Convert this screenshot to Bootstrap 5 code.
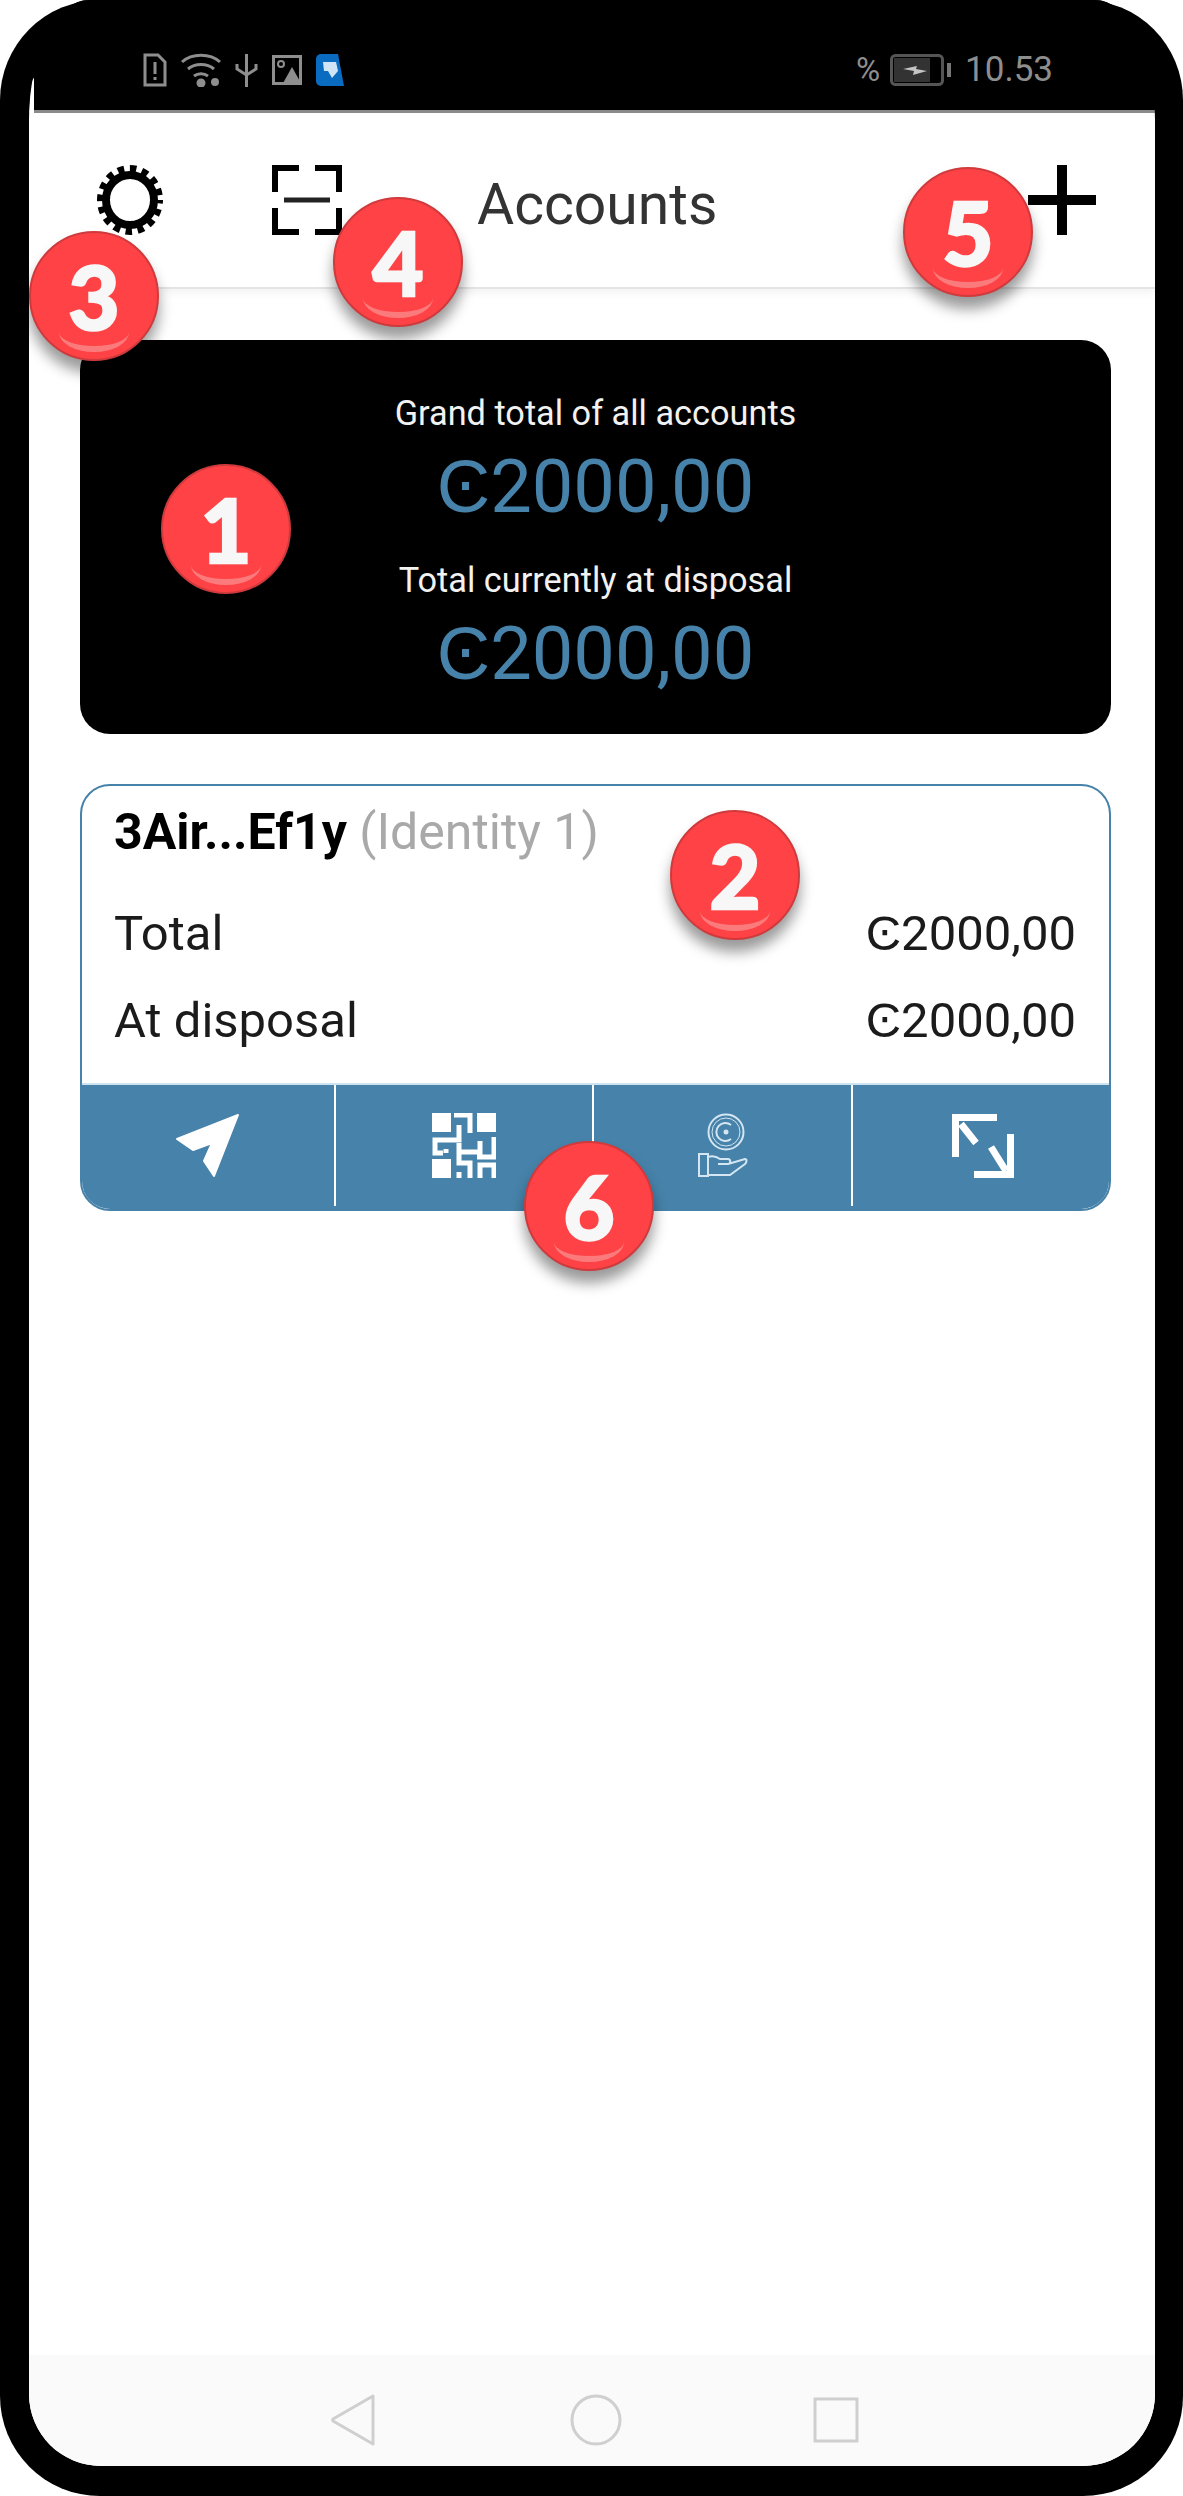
<!DOCTYPE html>
<html lang="en">
<head>
  <meta charset="UTF-8" />
  <meta name="viewport" content="width=device-width, initial-scale=1.0"/>
  <title>Accounts</title>
  <link href="https://cdn.jsdelivr.net/npm/bootstrap@5.3.0/dist/css/bootstrap.min.css" rel="stylesheet">
  <style>
    html, body { margin: 0; background: #fff; }
    body { font-family: Roboto, "Liberation Sans", sans-serif; width: 1183px; height: 2496px; overflow: hidden; }
    .phone-frame { position: relative; width: 1183px; height: 2496px; background: #000; border-radius: 100px; padding: 0 28px 30px 29px; }
    .phone-screen { height: 100%; background: linear-gradient(#000 113px, #fff 113px); border-radius: 60px 60px 72px 72px / 120px 120px 72px 72px; overflow: hidden; }
    .status-strip { position: relative; height: 113px; background: #000; border-bottom: 3px solid #8a8a8a; padding: 30px 102px 0 114px; color: #8e8e8e; }
    .status-strip::before { content: ""; position: absolute; left: 0; top: 78px; bottom: -3px; width: 5px; background: #fff; border-top-left-radius: 100%; }
    .status-left { gap: 14px; }
    .status-time { font-size: 35px; line-height: 38px; margin-left: 14px; }
    .status-pct { font-size: 33px; line-height: 38px; margin-right: 10px; }
    .app-header { height: 176px; border-bottom: 2px solid #e4e4e4; box-shadow: 0 4px 8px rgba(0,0,0,.05); padding: 0 59px 0 68px; }
    .scan-icon { margin-left: 109px; }
    .app-title { font-size: 57px; line-height: 1; color: #333; margin: 8px 0 0 135px; }
    .summary-box { background: #000; height: 394px; margin: 51px 44px 0 51px; border-radius: 30px; padding-top: 53px; }
    .summary-label { color: #f2f2f2; font-size: 34.300px; line-height: 40px; }
    .summary-amount { color: #4682a9; font-size: 74px; line-height: 108px; margin-bottom: 19px; }
    .account-box { height: 427px; margin: 50px 44px 0 51px; border: 2px solid #4682a9; border-radius: 30px; overflow: hidden; display: flex; flex-direction: column; }
    .account-body { flex: 1; padding: 18px 33px 0 32px; font-size: 49px; color: #1b1b1b; }
    .account-name { font-size: 50px; line-height: 56px; margin-bottom: 30px; }
    .account-name b { color: #000; font-weight: 700; }
    .account-name span { color: #a9a9a9; }
    .account-row { line-height: 87px; }
    .action-bar { height: 126px; background: #4682a9; border-top: 2px solid #cfe2ef; display: grid; grid-template-columns: 254px 258px 259px 1fr; }
    .action-cell { border-right: 2px solid #fff; margin-bottom: 3px; }
    .action-cell:last-child { border-right: 0; padding-left: 3px; }
    .nav-strip { position: absolute; left: 29px; right: 28px; bottom: 30px; height: 111px; background: #fafafa; border-radius: 0 0 72px 72px; padding: 19px 0 0 302px; }
    .nav-home { margin: 0 191px 0 195px; }
    .note-pin { position: absolute; width: 130px; height: 130px; border-radius: 50%; background: #fe4245; border: 2px solid #cf3a3d; box-shadow: 0 12px 14px rgba(0,0,0,.4); color: #f7f7f7; -webkit-text-stroke: 2.500px #f7f7f7; font-family: Lato, sans-serif; font-weight: 900; font-size: 88px; line-height: 126px; text-align: center; overflow: hidden; }
    .note-pin::after { content: ""; position: absolute; left: 28px; right: 28px; bottom: 7px; height: 20px; border-bottom: 6px solid #fb7b7d; border-radius: 0 0 50% 50% / 0 0 100% 100%; }
    .pin-1 { left: 161px; top: 464px; }
    .pin-2 { left: 670px; top: 810px; }
    .pin-3 { left: 29px; top: 231px; }
    .pin-4 { left: 333px; top: 197px; }
    .pin-5 { left: 903px; top: 167px; }
    .pin-6 { left: 524px; top: 1141px; }
  </style>
</head>
<body>
  <div class="phone-frame">
    <div class="phone-screen">

      <!-- Status bar -->
      <div class="status-strip d-flex justify-content-between align-items-center">
        <div class="status-left d-flex align-items-center">
          <svg width="24" height="34" viewBox="0 0 24 34"><path d="M2 2h13l7 7v23H2z" fill="none" stroke="#8e8e8e" stroke-width="3"/><path d="M12 9v12M12 24v3" stroke="#8e8e8e" stroke-width="3"/></svg>
          <svg width="40" height="34" viewBox="0 0 40 34" fill="none" stroke="#8e8e8e" stroke-width="3"><path d="M1 9c10-9 28-9 38 0M7 16c7-6 19-6 26 0M13 23c4-3 10-3 14 0"/><circle cx="20" cy="30" r="3" fill="#8e8e8e"/><circle cx="34" cy="29" r="2.500" fill="#8e8e8e"/></svg>
          <svg width="23" height="34" viewBox="0 0 23 34" fill="none" stroke="#8e8e8e" stroke-width="3"><path d="M11.500 1v33M2 11v5l9.500 6 9.500-6v-5"/></svg>
          <svg width="30" height="30" viewBox="0 0 30 30"><path d="M1.500 1.500h27v27h-27z" fill="none" stroke="#8e8e8e" stroke-width="3"/><circle cx="9" cy="9" r="3" fill="none" stroke="#8e8e8e" stroke-width="2"/><path d="M10 30l10-18 10 18z" fill="#8e8e8e"/></svg>
          <svg width="28" height="32" viewBox="0 0 28 32"><path d="M5 0h17l6 32H5a5 5 0 0 1-5-5V5a5 5 0 0 1 5-5z" fill="#0a6cc0"/><path d="M7 8h13l2 9-6 7-4-7H8z" fill="#cfe4f5"/></svg>
        </div>
        <div class="d-flex align-items-center">
          <span class="status-pct">%</span>
          <svg width="61" height="32" viewBox="0 0 61 32"><rect x="1.500" y="1.500" width="51" height="29" rx="4" fill="#000" stroke="#555" stroke-width="3"/><rect x="4" y="4" width="36" height="24" fill="#333"/><path d="M13 15l14-3-1 3 11 2-14 4 1-4z" fill="#c4c4c4"/><rect x="57" y="9" width="4" height="14" fill="#777"/></svg>
          <span class="status-time">10.53</span>
        </div>
      </div>

      <!-- App header -->
      <div class="app-header d-flex align-items-center">
        <svg width="66" height="70" viewBox="0 0 66 70" fill="none" stroke="#000"><ellipse cx="33" cy="35" rx="24" ry="25" stroke-width="8"/><ellipse cx="33" cy="35" rx="29.500" ry="31.500" stroke-width="7" stroke-dasharray="6.500 5.700" stroke-dashoffset="3"/></svg>
        <svg class="scan-icon" width="70" height="70" viewBox="0 0 70 70" fill="none" stroke="#000" stroke-width="6"><path d="M3 27V3h24M43 3h24v24M3 43v24h24M43 67h24V43"/><path d="M12 35h46" stroke-width="5" stroke="#222"/></svg>
        <div class="app-title">Accounts</div>
        <svg class="ms-auto" width="68" height="70" viewBox="0 0 68 70"><path d="M34 0v70M0 35h68" stroke="#000" stroke-width="10"/></svg>
      </div>

      <!-- Totals -->
      <div class="summary-box text-center">
        <div class="summary-label">Grand total of all accounts</div>
        <div class="summary-amount">Ͼ2000,00</div>
        <div class="summary-label">Total currently at disposal</div>
        <div class="summary-amount">Ͼ2000,00</div>
      </div>

      <!-- Account card -->
      <div class="account-box">
        <div class="account-body">
          <div class="account-name"><b>3Air...Ef1y</b> <span>(Identity 1)</span></div>
          <div class="account-row d-flex justify-content-between"><span>Total</span><span>Ͼ2000,00</span></div>
          <div class="account-row d-flex justify-content-between"><span>At disposal</span><span>Ͼ2000,00</span></div>
        </div>
        <div class="action-bar">
          <div class="action-cell d-flex align-items-center justify-content-center">
            <svg width="64" height="64" viewBox="0 0 64 64"><path d="M62 1L38 62 28 47 36 29 17 36 1 25z" fill="#fff" stroke="#fff" stroke-width="2" stroke-linejoin="round"/></svg>
          </div>
          <div class="action-cell d-flex align-items-center justify-content-center">
            <svg width="64" height="65" viewBox="0 0 64 65" fill="none" stroke="#fff" stroke-width="5"><g fill="#fff" stroke="none"><rect width="19" height="19"/><rect x="45" width="19" height="19"/><rect y="46" width="19" height="19"/></g><path d="M22 2h16v18M27 12v15H3v13h8M14 36v4M48 28v11H25M27 30v20h11v15M62 24v20H45M48 65V52h14v13M27 59v6"/></svg>
          </div>
          <div class="action-cell d-flex align-items-center justify-content-center">
            <svg width="50" height="65" viewBox="0 0 50 65" fill="none" stroke="#d3e6f2" stroke-width="2"><circle cx="28" cy="19" r="17.500"/><circle cx="28" cy="19" r="14" stroke-width="1"/><path d="M33 12a9 9 0 1 0 0 14"/><circle cx="28" cy="19" r="1.500" fill="#d3e6f2"/><path d="M1 41h9v22H1zM10 44c5-2 8-1 12 2h8c3 0 3 5 0 5H20M30 51l17-5c2 0 2 3 0 5L32 62H10"/></svg>
          </div>
          <div class="action-cell d-flex align-items-center justify-content-center">
            <svg width="62" height="64" viewBox="0 0 62 64" fill="none" stroke="#fff" stroke-width="7"><path d="M3.500 43V3.500H45M9 10l15 19M58.500 20v40.500H22M39 33l15 24"/></svg>
          </div>
        </div>
      </div>
    </div>

    <!-- Android nav bar -->
    <div class="nav-strip d-flex align-items-center">
      <svg width="44" height="52" viewBox="0 0 44 52" fill="none" stroke="#cfcfcf" stroke-width="3"><path d="M42 2v48L2 27a2 2 0 0 1 0-2z" stroke-linejoin="round"/></svg>
      <svg class="nav-home" width="52" height="52" viewBox="0 0 52 52" fill="none" stroke="#cfcfcf" stroke-width="3"><circle cx="26" cy="26" r="24"/></svg>
      <svg width="46" height="46" viewBox="0 0 46 46" fill="none" stroke="#cfcfcf" stroke-width="3"><rect x="2" y="2" width="42" height="42"/></svg>
    </div>

    <!-- Numbered callouts -->
    <div class="note-pin pin-1">1</div>
    <div class="note-pin pin-2">2</div>
    <div class="note-pin pin-3">3</div>
    <div class="note-pin pin-4">4</div>
    <div class="note-pin pin-5">5</div>
    <div class="note-pin pin-6">6</div>
  </div>

  <script src="https://cdn.jsdelivr.net/npm/bootstrap@5.3.0/dist/js/bootstrap.bundle.min.js"></script>
</body>
</html>
